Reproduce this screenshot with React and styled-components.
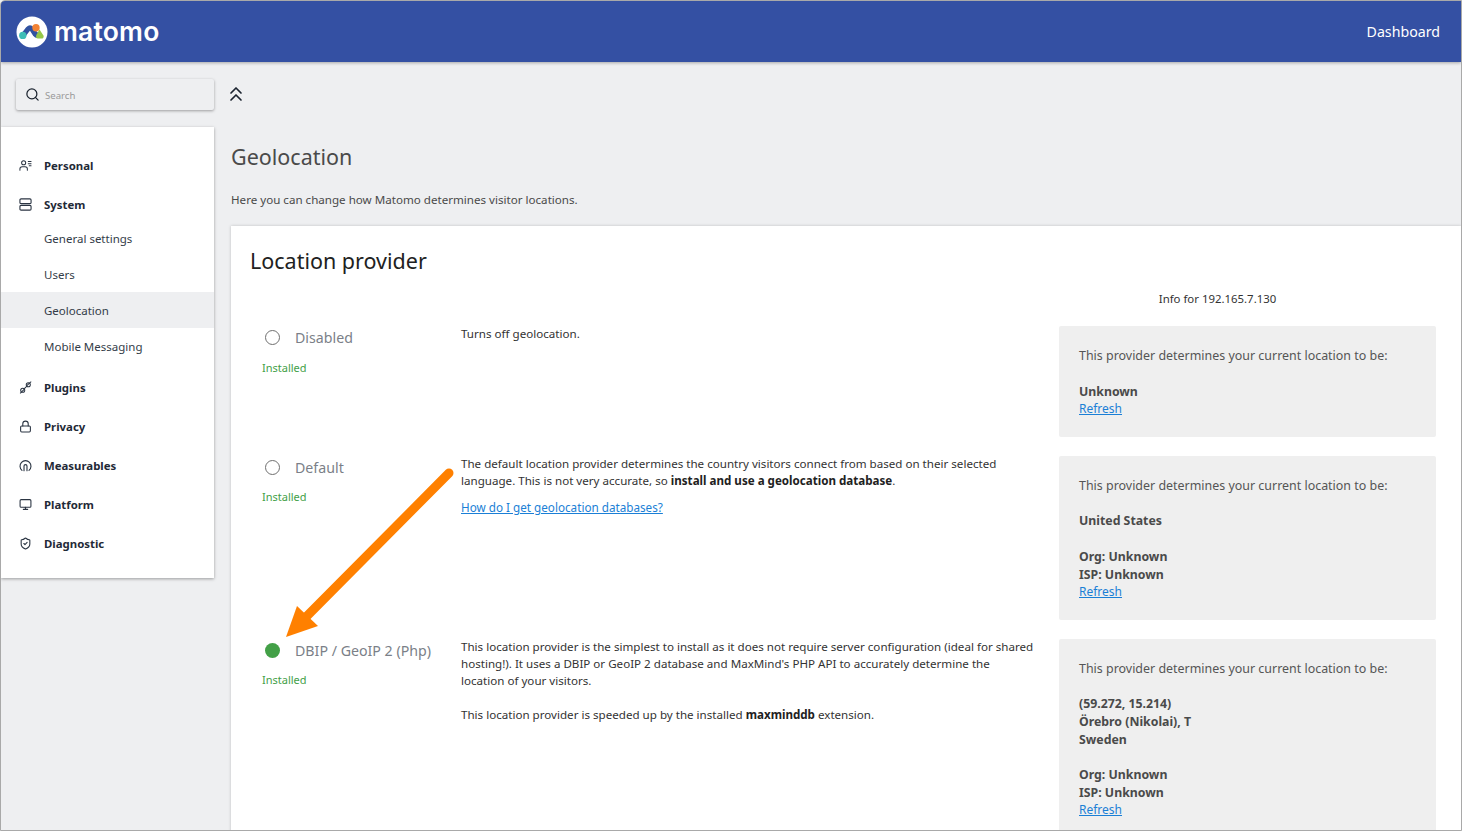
import React from 'react';
import styled, { createGlobalStyle } from 'styled-components';
import { Search, ChevronsUp, Lock, Monitor, ShieldCheck } from 'lucide-react';

const GlobalStyle = createGlobalStyle`
  html, body {
    margin: 0;
    height: 100%;
    overflow: hidden;
  }
  body {
    font-family: "Noto Sans", "Open Sans", sans-serif;
    font-size: 11.6px;
    color: #212121;
    background: #eeeff1;
  }
`;

const Frame = styled.div`
  box-sizing: border-box;
  height: 831px;
  display: flex;
  flex-direction: column;
  overflow: hidden;
  border: 1px solid #a9a9a9;
  border-radius: 5px 0 0 0;
  background: #eeeff1;
  position: relative;
`;

const Header = styled.header`
  flex: none;
  height: 61px;
  display: flex;
  align-items: center;
  justify-content: space-between;
  padding: 0 21px 0 15px;
  background: #3450a3;
  box-shadow: 0 1px 3px rgba(0, 0, 0, 0.3);
  position: relative;
  z-index: 2;
`;

const Brand = styled.div`
  display: flex;
  align-items: center;
  gap: 6px;
`;

const Wordmark = styled.span`
  font-family: Inter, sans-serif;
  font-size: 26.5px;
  font-weight: 600;
  letter-spacing: 0.2px;
  color: #fff;
  line-height: 30px;
  margin-top: -2px;
`;

const HeaderLink = styled.a`
  font-size: 14.2px;
  color: #fff;
  margin-top: -1px;
`;

const Body = styled.div`
  flex: 1;
  min-height: 0;
  display: flex;
`;

const Sidebar = styled.aside`
  flex: none;
  width: 213px;
  padding-top: 17px;
  display: flex;
  flex-direction: column;
  gap: 17px;
`;

const SearchBox = styled.div`
  margin-left: 15px;
  height: 31px;
  display: flex;
  align-items: center;
  gap: 5px;
  padding-left: 9px;
  border-radius: 2px;
  background: #eeeff1;
  box-shadow: 0 1px 3px rgba(0, 0, 0, 0.35);
  color: #1c2430;
`;

const SearchHint = styled.span`
  font-size: 9.6px;
  color: #9a9a9a;
  margin-top: 1px;
`;

const NavCard = styled.nav`
  height: 451px;
  box-sizing: border-box;
  padding-top: 19px;
  background: #fff;
  box-shadow: 0 1px 3px rgba(0, 0, 0, 0.35);
`;

const NavGroup = styled.div`
  height: 39px;
  display: flex;
  align-items: center;
  gap: 12px;
  padding-left: 18px;
  font-size: 11.4px;
  font-weight: 700;
  color: #1f2a37;
  svg {
    flex: none;
    width: 13px;
    height: 13px;
    color: #2b3543;
  }
`;

const NavItem = styled.div`
  height: 36px;
  display: flex;
  align-items: center;
  padding-left: 43px;
  font-size: 11.5px;
  color: #333c48;
  background: ${(p) => (p.$active ? '#eeeff1' : 'transparent')};
`;

const SubList = styled.div`
  margin-top: -4px;
  margin-bottom: 4px;
`;

const Main = styled.main`
  flex: 1;
  min-width: 0;
  padding: 0 0 0 17px;
  display: flex;
  flex-direction: column;
`;

const Collapse = styled.div`
  flex: none;
  height: 63px;
  display: flex;
  align-items: center;
  color: #1c2430;
  box-sizing: border-box;
  margin-left: -7px;
`;

const PageTitle = styled.h1`
  margin: 11px 0 0;
  font-size: 21.5px;
  line-height: 42px;
  font-weight: 400;
  color: #4a4a4a;
`;

const Intro = styled.p`
  margin: 13px 0 0;
  line-height: 18px;
  font-size: 11.6px;
  color: #4a4a4a;
`;

const Card = styled.section`
  flex: 1;
  margin-top: 17px;
  padding: 18px 26px 0 19px;
  background: #fff;
  box-shadow: 0 0 3px rgba(0, 0, 0, 0.2);
`;

const CardTitle = styled.h2`
  margin: 0;
  font-size: 21.5px;
  line-height: 34px;
  font-weight: 400;
  color: #212121;
`;

const InfoFor = styled.div`
  margin: 12px 0 0 750px;
  height: 18px;
  line-height: 18px;
  text-align: center;
  font-size: 11.4px;
  color: #333;
`;

const Row = styled.div`
  margin-top: ${(p) => (p.$first ? '18px' : '19px')};
  display: grid;
  grid-template-columns: 211px 598px 377px;
  align-items: start;
`;

const ProviderCol = styled.div`
  padding-left: 12px;
`;

const RadioLine = styled.div`
  display: flex;
  align-items: center;
  gap: 15px;
  padding-left: 3px;
  height: 22px;
  font-size: 14.2px;
  color: #7b7f88;
`;

const Radio = styled.span`
  box-sizing: border-box;
  width: 15px;
  height: 15px;
  border-radius: 50%;
  flex: none;
  border: ${(p) => (p.$checked ? 'none' : '1.5px solid #6f6f6f')};
  background: ${(p) => (p.$checked ? '#43a047' : 'transparent')};
`;

const Installed = styled.div`
  margin-top: ${(p) => p.$gap || 10}px;
  line-height: 18px;
  font-size: 11px;
  color: #43a047;
`;

const Link = styled.a`
  color: #1b7fd6;
  text-decoration: underline;
`;

const Desc = styled.div`
  margin-top: -1px;
  font-size: 11.6px;
  line-height: 17px;
  color: #333;
  padding-right: 24px;
  p {
    margin: 0 0 10px;
  }
  b {
    color: #212121;
  }
  ${Link} {
    font-size: 11.7px;
  }
`;

const DescText = styled.p`
  && {
    margin-bottom: ${(p) => p.$gap || 10}px;
  }
`;

const InfoBox = styled.div`
  box-sizing: border-box;
  min-height: ${(p) => p.$height}px;
  padding: 21px 20px 0;
  border-radius: 2px;
  background: #efefef;
  font-size: 12.45px;
  color: #555;
  line-height: 18px;
  ${Link} {
    display: block;
    font-size: 12px;
    margin-top: -1px;
  }
`;

const Strong = styled.div`
  margin-top: ${(p) => p.$gap || 0}px;
  font-weight: 700;
  font-size: 12.3px;
  color: #4a4a4a;
`;

const Arrow = styled.svg`
  position: absolute;
  left: 280px;
  top: 462px;
  pointer-events: none;
`;

const LogoMark = () => (
  <svg width="32" height="32" viewBox="0 0 32 32">
    <circle cx="16" cy="16" r="15.5" fill="#fff" />
    <path d="M7 19.5 L12 13 Q14 11 16 13 L19.5 18.5 Q21 20.5 23 18.5" fill="none" stroke="#3152a0" strokeWidth="5.2" strokeLinecap="round" strokeLinejoin="round" />
    <circle cx="6.8" cy="19.4" r="3.7" fill="#3ebdb6" />
    <circle cx="20" cy="11.7" r="3.7" fill="#f38334" />
    <path d="M23.5 13.6 L27.6 19.8 Q28 22.6 25.6 22.6 L21.8 22.6 Q19.2 22 20.4 19 Z" fill="#95c748" />
  </svg>
);

const PersonalIcon = () => (
  <svg viewBox="0 0 14 14" fill="none" stroke="currentColor" strokeWidth="1.1" strokeLinecap="round">
    <circle cx="5" cy="4" r="2.2" />
    <path d="M1 12 V10.6 Q1 8.4 3.4 8.4 H6.6 Q9 8.4 9 10.6 V12" />
    <path d="M10 2.8 H13 M10 5 H13 M11 7.2 H13" />
  </svg>
);

const SystemIcon = () => (
  <svg viewBox="0 0 14 14" fill="none" stroke="currentColor" strokeWidth="1.2">
    <rect x="1" y="1" width="12" height="5" rx="1.2" />
    <rect x="1" y="8" width="12" height="5" rx="1.2" />
  </svg>
);

const PluginIcon = () => (
  <svg viewBox="0 0 14 14" fill="none" stroke="currentColor" strokeWidth="1.1" strokeLinecap="round">
    <circle cx="4" cy="10" r="2.2" />
    <circle cx="10" cy="4" r="2.2" />
    <path d="M1.5 13 L5 9.5 M9 4.5 L12.8 1 M5.5 8.5 L8.5 5.5" />
  </svg>
);

const MeasurableIcon = () => (
  <svg viewBox="0 0 14 14" fill="none" stroke="currentColor" strokeWidth="1.2" strokeLinecap="round">
    <path d="M3.2 12.2 A5.9 5.9 0 1 1 10.8 12.2" />
    <path d="M5.4 12.6 V7.6 A1.6 1.6 0 0 1 8.6 7.6 V12.6" />
  </svg>
);

const iconProps = { strokeWidth: 2 };

const App = () => (
  <>
    <GlobalStyle />
    <Frame>
      <Header>
        <Brand>
          <LogoMark />
          <Wordmark>matomo</Wordmark>
        </Brand>
        <HeaderLink>Dashboard</HeaderLink>
      </Header>
      <Body>
        <Sidebar>
          <SearchBox>
            <Search size={15} strokeWidth={2} />
            <SearchHint>Search</SearchHint>
          </SearchBox>
          <NavCard>
            <NavGroup><PersonalIcon />Personal</NavGroup>
            <NavGroup><SystemIcon />System</NavGroup>
            <SubList>
              <NavItem>General settings</NavItem>
              <NavItem>Users</NavItem>
              <NavItem $active>Geolocation</NavItem>
              <NavItem>Mobile Messaging</NavItem>
            </SubList>
            <NavGroup><PluginIcon />Plugins</NavGroup>
            <NavGroup><Lock {...iconProps} />Privacy</NavGroup>
            <NavGroup><MeasurableIcon />Measurables</NavGroup>
            <NavGroup><Monitor {...iconProps} />Platform</NavGroup>
            <NavGroup><ShieldCheck {...iconProps} />Diagnostic</NavGroup>
          </NavCard>
        </Sidebar>
        <Main>
          <Collapse><ChevronsUp size={24} strokeWidth={1.7} /></Collapse>
          <PageTitle>Geolocation</PageTitle>
          <Intro>Here you can change how Matomo determines visitor locations.</Intro>
          <Card>
            <CardTitle>Location provider</CardTitle>
            <InfoFor>Info for 192.165.7.130</InfoFor>
            <Row $first>
              <ProviderCol>
                <RadioLine><Radio />Disabled</RadioLine>
                <Installed $gap={11}>Installed</Installed>
              </ProviderCol>
              <Desc><p>Turns off geolocation.</p></Desc>
              <InfoBox $height={111}>
                This provider determines your current location to be:
                <Strong $gap={18}>Unknown</Strong>
                <Link>Refresh</Link>
              </InfoBox>
            </Row>
            <Row>
              <ProviderCol>
                <RadioLine><Radio />Default</RadioLine>
                <Installed>Installed</Installed>
              </ProviderCol>
              <Desc>
                <p>
                  The default location provider determines the country visitors connect from based on their selected
                  language. This is not very accurate, so <b>install and use a geolocation database</b>.
                </p>
                <Link>How do I get geolocation databases?</Link>
              </Desc>
              <InfoBox $height={164}>
                This provider determines your current location to be:
                <Strong $gap={17}>United States</Strong>
                <Strong $gap={18}>Org: Unknown</Strong>
                <Strong>ISP: Unknown</Strong>
                <Link>Refresh</Link>
              </InfoBox>
            </Row>
            <Row>
              <ProviderCol>
                <RadioLine><Radio $checked />DBIP / GeoIP 2 (Php)</RadioLine>
                <Installed>Installed</Installed>
              </ProviderCol>
              <Desc>
                <DescText $gap={17}>
                  This location provider is the simplest to install as it does not require server configuration (ideal for shared
                  hosting!). It uses a DBIP or GeoIP 2 database and MaxMind's PHP API to accurately determine the
                  location of your visitors.
                </DescText>
                <p>This location provider is speeded up by the installed <b>maxminddb</b> extension.</p>
              </Desc>
              <InfoBox $height={200}>
                This provider determines your current location to be:
                <Strong $gap={17}>(59.272, 15.214)</Strong>
                <Strong>Örebro (Nikolai), T</Strong>
                <Strong>Sweden</Strong>
                <Strong $gap={17}>Org: Unknown</Strong>
                <Strong>ISP: Unknown</Strong>
                <Link>Refresh</Link>
              </InfoBox>
            </Row>
          </Card>
        </Main>
      </Body>
      <Arrow width="180" height="180" viewBox="0 0 180 180">
        <path d="M168 10 L26 153" stroke="#ff8000" strokeWidth="9" strokeLinecap="round" fill="none" />
        <path d="M5 174 L16 143 L37 163 Z" fill="#ff8000" />
      </Arrow>
    </Frame>
  </>
);

export default App;
